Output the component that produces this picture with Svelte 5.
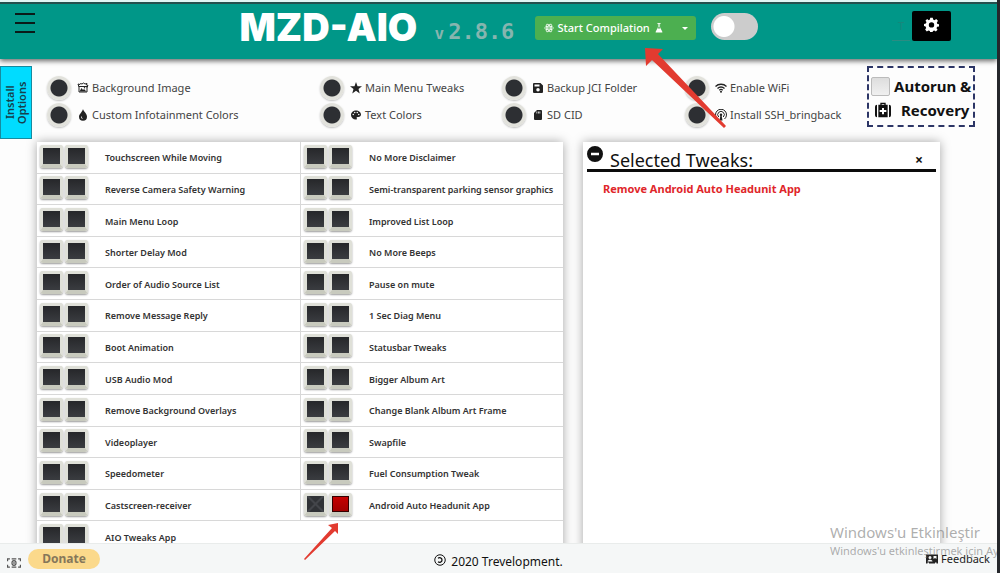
<script>
  const options = [
    { icon: 'image', label: 'Background Image' },
    { icon: 'star', label: 'Main Menu Tweaks' },
    { icon: 'save', label: 'Backup JCI Folder' },
    { icon: 'wifi', label: 'Enable WiFi' },
    { icon: 'drop', label: 'Custom Infotainment Colors' },
    { icon: 'palette', label: 'Text Colors' },
    { icon: 'sd', label: 'SD CID' },
    { icon: 'antenna', label: 'Install SSH_bringback' }
  ];

  const tweaks = [
    'Touchscreen While Moving',
    'Reverse Camera Safety Warning',
    'Main Menu Loop',
    'Shorter Delay Mod',
    'Order of Audio Source List',
    'Remove Message Reply',
    'Boot Animation',
    'USB Audio Mod',
    'Remove Background Overlays',
    'Videoplayer',
    'Speedometer',
    'Castscreen-receiver',
    'AIO Tweaks App',
    'No More Disclaimer',
    'Semi-transparent parking sensor graphics',
    'Improved List Loop',
    'No More Beeps',
    'Pause on mute',
    '1 Sec Diag Menu',
    'Statusbar Tweaks',
    'Bigger Album Art',
    'Change Blank Album Art Frame',
    'Swapfile',
    'Fuel Consumption Tweak',
    'Android Auto Headunit App'
  ];

  let removed = $state({ 'Android Auto Headunit App': true });
  let installed = $state({});
  let selected = $derived(tweaks.filter((t) => removed[t]));
</script>

{#snippet icon(name)}
  <svg class="icon" viewBox="0 0 24 24" aria-hidden="true">
    {#if name === 'image'}
      <path d="M4 10 2 4l4 1 1-2 3 1 3-2 3 2 4-1-1 3 3 1-2 4" fill="none" stroke="currentColor" stroke-width="2" />
      <path d="M4 9h16v11H4z" fill="none" stroke="currentColor" stroke-width="2" />
      <path d="m5 19 4-7 3 4 2-2 5 5z" />
      <circle cx="15" cy="11.500" r="1.500" />
    {:else if name === 'star'}
      <path d="m12 0 3 8.500h9l-7 5.500 2.500 9-7.500-5.500L4.500 23 7 14 0 8.500h9z" />
    {:else if name === 'save'}
      <path d="M4 2h13l5 5v13a2 2 0 0 1-2 2H4a2 2 0 0 1-2-2V4a2 2 0 0 1 2-2zm1 3v4h10V5zm7 7a3.500 3.500 0 1 0 0 7 3.500 3.500 0 0 0 0-7z" fill-rule="evenodd" />
    {:else if name === 'wifi'}
      <g fill="none" stroke="currentColor" stroke-width="2.600">
        <path d="M1 9c6-6 16-6 22 0" /><path d="M5 13c4-4 10-4 14 0" /><path d="M8.500 16.500c2-2 5-2 7 0" />
      </g>
      <circle cx="12" cy="19.500" r="2" />
    {:else if name === 'drop'}
      <path d="M12 0c1 5 8 9 8 15.500a8 8 0 0 1-16 0C4 10 11 6 12 0zM8 15c0 3 1.500 4.500 4 5-1.500-1.500-2.500-3-2.500-5z" fill-rule="evenodd" />
    {:else if name === 'palette'}
      <path d="M12 3c5.500 0 10 3.500 10 8 0 3-2.500 5-5 5h-2c-2 0-2 1.500-1.500 2.500.8 1.500 0 2.500-1.500 2.500A9.500 9 0 0 1 2 12c0-5 4.500-9 10-9zM6.500 9.500a1.500 1.500 0 1 0 0 3 1.500 1.500 0 0 0 0-3zm3-4a1.500 1.500 0 1 0 0 3 1.500 1.500 0 0 0 0-3zm5 0a1.500 1.500 0 1 0 0 3 1.500 1.500 0 0 0 0-3zm3 4a1.500 1.500 0 1 0 0 3 1.500 1.500 0 0 0 0-3z" fill-rule="evenodd" />
    {:else if name === 'sd'}
      <path d="M10 2h8a2 2 0 0 1 2 2v16a2 2 0 0 1-2 2H6a2 2 0 0 1-2-2V8zm-1 3v4h1.500V5zm3 0v4h1.500V5zm3 0v4h1.500V5z" fill-rule="evenodd" />
    {:else if name === 'antenna'}
      <g fill="none" stroke="currentColor" stroke-width="2">
        <path d="M5 20a11 11 0 1 1 14 0" /><path d="M7.500 16a6.500 6.500 0 1 1 9 0" />
      </g>
      <circle cx="12" cy="11.500" r="2.500" /><path d="m11 12-2 11h6l-2-11z" />
    {:else if name === 'atom'}
      <g fill="none" stroke="currentColor" stroke-width="1.800">
        <ellipse cx="12" cy="12" rx="10.500" ry="4.500" />
        <ellipse cx="12" cy="12" rx="10.500" ry="4.500" transform="rotate(60 12 12)" />
        <ellipse cx="12" cy="12" rx="10.500" ry="4.500" transform="rotate(120 12 12)" />
      </g>
      <circle cx="12" cy="12" r="2" />
    {:else if name === 'flask'}
      <path d="M8 0h8v2h-1.500v8L20 21v2H4v-2l5.500-11V2H8zm3 2v7l-2 4h6l-2-4V2z" fill-rule="evenodd" />
    {:else if name === 'gear'}
      <path d="M10 1h4l.6 3 2.300 1 2.600-1.700 2.800 2.800L20.500 9l1 2 2.500.5v3.500l-3 .6-1 2.300 1.700 2.600-2.800 2.500-2.400-1.500-2.300 1-.6 3H10l-.6-3-2.300-1-2.600 1.500L1.800 20l1.700-2.600-1-2.300L0 14.500V11l3-.6 1-2.300-1.700-2.300L5 3.300 7.400 5l2-1zM12 8.300a4.300 4.300 0 1 0 0 8.600 4.300 4.300 0 0 0 0-8.600z" fill-rule="evenodd" />
    {:else if name === 'medkit'}
      <path d="M8 4V1h8v3h3v19H5V4zm2 0h4V3h-4zm.5 5v3H7v3h3.500v3.500h3V15H17v-3h-3.500V9z" fill-rule="evenodd" />
      <path d="M3 4v19a3 3 0 0 1-3-3V7a3 3 0 0 1 3-3zm18 0v19a3 3 0 0 0 3-3V7a3 3 0 0 0-3-3z" />
    {:else if name === 'minus'}
      <path d="M12 0a12 12 0 1 1 0 24 12 12 0 0 1 0-24zM6 10v4h12v-4z" fill-rule="evenodd" />
    {:else if name === 'money'}
      <g fill="none" stroke="currentColor" stroke-width="2">
        <path d="M1 9V5h4m3 0h8m3 0h4v4m0 6v4h-4m-3 0H8m-3 0H1v-4" /><ellipse cx="12" cy="12" rx="3.500" ry="4" /><path d="M12 10v4" />
      </g>
    {:else if name === 'copyleft'}
      <g fill="none" stroke="currentColor" stroke-width="2">
        <circle cx="12" cy="12" r="10.500" /><path d="M8 8.500c3-2.500 8-1 8 3.500s-5 6-8 3.500" stroke-width="2.600" />
      </g>
    {:else if name === 'card'}
      <path d="M0 3h24v18h-3v-2h-3v2H6v-2H3v2H0zm8 3a3 3 0 1 0 0 6 3 3 0 0 0 0-6zm-5 11h10c0-5-10-5-10 0zM15 6v6l3-2 3 2V6z" fill-rule="evenodd" />
    {/if}
  </svg>
{/snippet}

<div class="page">
  <header>
    <button class="menu" aria-label="Menu"><span></span><span></span><span></span></button>
    <div class="brand">
      <h1>MZD-AIO</h1>
      <span class="version"><small>v</small>2.8.6</span>
      <div class="compile">
        <button class="start">{@render icon('atom')}Start Compilation{@render icon('flask')}</button>
        <button class="more" aria-label="More compile options"><i></i></button>
      </div>
      <input class="toggle" type="checkbox" aria-label="Advanced mode" />
    </div>
    <div class="tools">
      <span class="hint">T</span>
      <button class="gear" aria-label="Settings">{@render icon('gear')}</button>
    </div>
  </header>

  <section class="options">
    <button class="tab">Install<br />Options</button>
    <div class="choices">
      {#each options as o}
        <label class="choice"><input type="checkbox" />{@render icon(o.icon)}<span>{o.label}</span></label>
      {/each}
    </div>
    <label class="autorun">
      <span><input type="checkbox" />Autorun &amp;</span>
      <span>{@render icon('medkit')}Recovery</span>
    </label>
  </section>

  <main>
    <section class="panel tweaks">
      {#each tweaks as t}
        <div class="tweak">
          <input type="checkbox" aria-label="Install {t}" class:dim={removed[t]} bind:checked={installed[t]} />
          <input type="checkbox" aria-label="Remove {t}" bind:checked={removed[t]} />
          <span>{t}</span>
        </div>
      {/each}
    </section>
    <section class="panel selected">
      <div class="head">
        <button class="collapse" aria-label="Collapse">{@render icon('minus')}</button>
        <h2>Selected Tweaks:</h2>
        <button class="close" aria-label="Close">×</button>
      </div>
      <ul>
        {#each selected as s}<li>Remove {s}</li>{/each}
      </ul>
    </section>
  </main>

  <footer>
    <div class="give">{@render icon('money')}<button>Donate</button></div>
    <div class="copy">{@render icon('copyleft')}2020 Trevelopment.</div>
    <a href="#feedback">{@render icon('card')}Feedback</a>
  </footer>

  <div class="activate"><b>Windows'u Etkinleştir</b><span>Windows'u etkinleştirmek için Aya</span></div>

  <svg class="arrow big" viewBox="0 0 82 81" aria-hidden="true"><path d="m0 0 18 1-5 5 68 72-2 2L7 12l-6 6z" /></svg>
  <svg class="arrow small" viewBox="0 0 36 38" aria-hidden="true"><path d="m34 0-10 2 4 3L0 36l1 1 30-29 3 3z" /></svg>
</div>

<style>
  :global(body) { overflow: hidden; }
  * { box-sizing: border-box; }
  button, input { margin: 0; padding: 0; border: 0; font: inherit; color: inherit; background: none; }
  .page {
    position: relative;
    display: flex;
    flex-direction: column;
    height: 100vh;
    overflow: hidden;
    border-right: 3px solid #25272b;
    background: #fdfdfd;
    color: #111;
    font: 12px/16px "Noto Sans", sans-serif;
  }
  .icon { display: block; flex: none; width: 12px; height: 12px; fill: currentColor; }

  header {
    display: grid;
    grid-template-columns: 1fr auto 1fr;
    flex: none;
    height: 59px;
    padding: 0 46px 0 15px;
    border-top: 2px solid #dff5f4;
    background: linear-gradient(#23504e 2px, #009788 2px);
    box-shadow: 0 2px 5px rgba(0, 0, 0, .6);
    z-index: 2;
  }
  .menu { display: flex; flex-direction: column; gap: 7px; width: 20px; height: 20px; margin-top: 11px; }
  .menu span { width: 20px; height: 2px; background: #0a1a18; }
  .brand { display: flex; align-items: flex-start; margin-left: 31px; }
  h1 { width: 195px; margin: 3px 0 0; color: #fff; font: 900 38px/44px Inter, sans-serif; }
  .version { width: 100px; margin-top: 16px; color: #86b5af; font: bold 22px/28px "DejaVu Sans Mono", monospace; }
  .version small { font-size: 16px; margin-right: 4px; }
  .compile { display: flex; width: 161px; height: 24px; margin: 14px 15px 0 0; border-radius: 3px; background: #4caf50; color: #fff; }
  .start { display: flex; flex: 1; align-items: center; gap: 4px; padding-left: 9px; font-size: 11px; font-weight: 500; white-space: nowrap; }
  .start .icon { width: 10px; height: 10px; }
  .more { display: grid; width: 22px; place-items: center; }
  .more i { border: 3px solid transparent; border-top-color: #fff; border-bottom: 0; }
  .toggle { appearance: none; width: 47px; height: 27px; margin-top: 11px; border-radius: 14px; background: radial-gradient(circle at 13px 50%, #fff 10px, #ccc 11px); }
  .tools { display: flex; justify-content: flex-end; align-items: flex-start; gap: 2px; padding-top: 9px; }
  .hint { width: 18px; height: 30px; border-bottom: 1px solid #2b8c82; color: #16877b; font-size: 11px; line-height: 30px; text-align: center; }
  .gear { display: grid; place-items: center; width: 39px; height: 30px; border-radius: 2px; background: #000; color: #fff; }
  .gear .icon { width: 15px; height: 15px; margin-bottom: 4px; }

  .options { display: flex; align-items: flex-start; flex: none; height: 83px; padding: 7px 22px 0 0; }
  .tab {
    width: 32px; height: 73px;
    border: 1px solid #168ba0;
    background: #00dcff;
    color: #16404c;
    font-size: 11px; font-weight: 600; line-height: 12px;
    writing-mode: vertical-rl;
    transform: rotate(180deg);
  }
  .choices { display: grid; grid-template-columns: 273fr 182fr 183fr 182fr; flex: 1; grid-auto-rows: 27px; padding: 8px 0 0 15px; }
  .choice { display: flex; align-items: center; color: #444; font-size: 11px; white-space: nowrap; }
  .choice input { appearance: none; width: 24px; height: 24px; border-radius: 50%; background: radial-gradient(circle at 50% 50%, #2d2f33 8px, #e2e2dc 9px); box-shadow: 0 1px 2px rgba(0, 0, 0, .25); }
  .choice .icon { margin: 0 3px 0 6px; color: #222; }
  .autorun { display: flex; flex-direction: column; width: 108px; height: 61px; padding: 6px 2px; border: 2px dashed #2c3566; font-size: 15px; font-weight: 700; line-height: 24px; }
  .autorun span { display: flex; align-items: center; gap: 4px; height: 24px; white-space: nowrap; }
  .autorun span + span { gap: 10px; padding-left: 4px; }
  .autorun input { appearance: none; flex: none; width: 19px; height: 19px; border: 1px solid #bbb; border-radius: 2px; background: linear-gradient(#ddd, #f0f0f0); }
  .autorun .icon { width: 16px; height: 16px; }

  main { display: grid; grid-template-columns: 526fr 357fr; align-items: start; gap: 20px; padding: 0 57px 0 37px; }
  .panel { min-height: 411px; background: #fff; box-shadow: 0 0 10px rgba(0, 0, 0, .35); }
  .tweaks { display: grid; grid-template: repeat(13, 1fr) / repeat(2, minmax(0, 1fr)); grid-auto-flow: column; }
  .tweak { display: flex; align-items: center; padding-left: 3px; border-bottom: 1px solid #d8d8d8; color: #333; font-size: 9px; font-weight: 600; white-space: nowrap; }
  .tweak:nth-child(n + 14) { border-left: 1px solid #d8d8d8; }
  .tweak span { margin: 2px 0 0 15px; }
  .tweak input {
    appearance: none;
    width: 23px; height: 23px; margin: 0 2px 2px 0;
    border: 3px solid #dfe0d8;
    border-bottom: 4px solid #c8cabe;
    border-radius: 3px;
    background: linear-gradient(#26272a, #3a3c40);
    box-shadow: 0 1px 2px rgba(0, 0, 0, .4);
  }
  .tweak input:checked { background: linear-gradient(#c80000, #a00000); box-shadow: inset 0 0 0 1px #300, 0 1px 2px rgba(0, 0, 0, .4); }
  .tweak .dim { background: linear-gradient(45deg, transparent 45%, #43454a 46% 54%, transparent 55%), linear-gradient(135deg, #303236 45%, #43454a 46% 54%, #303236 55%); }

  .selected { padding: 4px; }
  .head { display: flex; align-items: flex-start; height: 26px; border-bottom: 3px solid #0c0c0c; }
  .collapse { width: 16px; height: 16px; }
  .collapse .icon { width: 16px; height: 16px; }
  h2 { flex: 1; margin: 2px 0 0 7px; font-size: 18px; font-weight: 400; line-height: 24px; }
  .close { width: 16px; margin: 6px 9px 0 0; font-size: 14px; font-weight: 700; }
  ul { margin: 9px 0 0 16px; padding: 0; list-style: none; }
  li { color: #e0262a; font-size: 11px; font-weight: 700; }

  footer {
    position: absolute;
    inset: auto 0 0;
    display: grid;
    grid-template-columns: 1fr auto 1fr;
    height: 30px;
    padding: 0 7px;
    border-top: 1px solid #e9eceb;
    background: #f5f7f7;
  }
  .give, .copy, footer a { display: flex; align-items: center; }
  .give { gap: 7px; color: #555; }
  .give .icon { width: 14px; height: 14px; margin-top: 9px; }
  .give button { width: 72px; height: 20px; border-radius: 10px; background: #fbd98b; color: #86775a; font-size: 12px; font-weight: 700; }
  .copy { gap: 5px; padding-top: 7px; }
  .copy .icon { margin-bottom: 4px; }
  footer a { justify-content: flex-end; gap: 3px; color: #222; font-size: 11px; text-decoration: none; }

  .activate { position: absolute; top: 522px; left: 830px; z-index: 3; color: rgba(120, 120, 120, .6); white-space: nowrap; pointer-events: none; }
  .activate b { display: block; font-size: 15px; font-weight: 400; line-height: 20px; }
  .activate span { display: block; font-size: 11px; line-height: 18px; }
  .arrow { position: absolute; z-index: 4; fill: #e23b30; pointer-events: none; }
  .big { top: 48px; left: 645px; width: 82px; height: 81px; }
  .small { top: 523px; left: 304px; width: 36px; height: 38px; }
</style>
